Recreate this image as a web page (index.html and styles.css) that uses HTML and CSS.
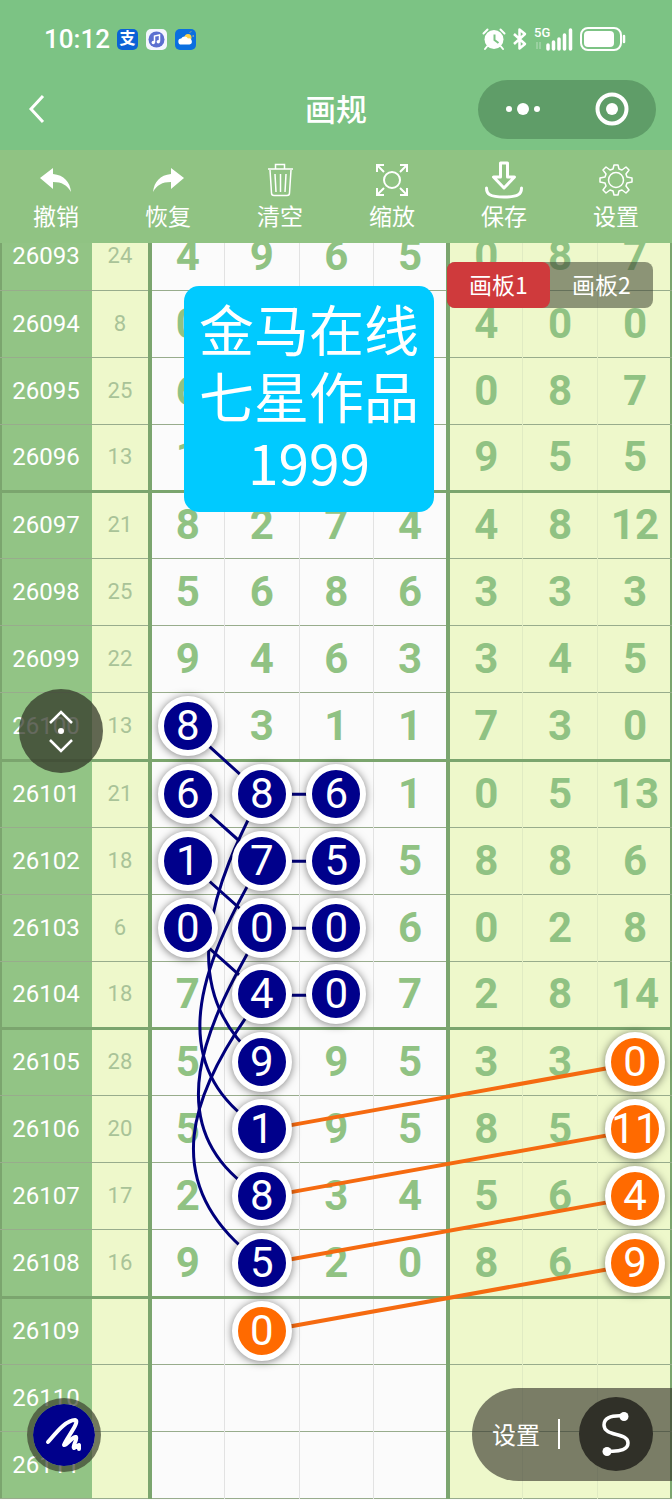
FILE: index.html
```html
<!DOCTYPE html>
<html lang="zh-CN">
<head>
    <meta charset="UTF-8">
    <meta name="viewport" content="width=device-width, initial-scale=1.0">
    <title>画规</title>
    <link rel="stylesheet" href="styles.css">
</head>
<body>
    <header class="header">
        <div class="status-bar">
            <span class="time">10:12</span>
            <span class="app-icon app-pay">支</span>
            <svg class="app-svg" viewBox="0 0 21 21">
                <rect width="21" height="21" rx="5" fill="#f4f6ff"/>
                <circle cx="10.500" cy="10.500" r="8" fill="#5b6fd0"/>
                <path d="M8.500 13.500V7l5-1v6.500" fill="none" stroke="#fff" stroke-width="1.500"/>
                <circle cx="7.300" cy="13.500" r="1.700" fill="#fff"/>
                <circle cx="12.300" cy="12.700" r="1.700" fill="#fff"/>
            </svg>
            <svg class="app-svg" viewBox="0 0 21 21">
                <rect width="21" height="21" rx="5" fill="#0a6fe0"/>
                <circle cx="13" cy="8.500" r="3.500" fill="#ffd34a"/>
                <path d="M15 3.500l1-1M17.500 7h1.500" stroke="#ffd34a"/>
                <path d="M6.500 15.500a3 3 0 0 1-.3-6A3.800 3.800 0 0 1 13 9.500a3 3 0 0 1 1.500 6z" fill="#fff"/>
            </svg>
            <div class="status-right">
                <svg width="24" height="24" viewBox="0 0 24 24">
                    <path d="M1.500 6.500l4-4M22.500 6.500l-4-4M5 19.500l-2 2.500M19 19.500l2 2.500" stroke="#fff" stroke-width="2" stroke-linecap="round"/>
                    <circle cx="12" cy="12.500" r="9.500" fill="#fff"/>
                    <path d="M12.500 7.500v5.500l4 3" fill="none" stroke="#7cc384" stroke-width="2"/>
                </svg>
                <svg width="16" height="24" viewBox="0 0 16 24">
                    <path d="M2 7l11 10-5.500 4.500v-19L13 7 2 17" fill="none" stroke="#fff" stroke-width="2.500" stroke-linejoin="round"/>
                </svg>
                <div class="signal">
                    <span class="net">5G</span>
                    <svg width="40" height="24" viewBox="0 0 40 24">
                        <path d="M3 15v7M6 15v7" stroke="#b9dfbd"/>
                        <path d="M14 18v4M19.500 15v7M25 12v10M30.500 8v14M36.500 3v19" stroke="#fff" stroke-width="3.500" stroke-linecap="round"/>
                    </svg>
                </div>
                <svg width="46" height="24" viewBox="0 0 46 24">
                    <rect x="1" y="1" width="40" height="22" rx="7" fill="none" stroke="#fff" stroke-width="2"/>
                    <rect x="4" y="4" width="30" height="16" rx="4" fill="#fff"/>
                    <path d="M44 9v6" stroke="#fff" stroke-width="2.500" stroke-linecap="round"/>
                </svg>
            </div>
        </div>
        <div class="nav-bar">
            <button class="back" aria-label="返回">
                <svg width="18" height="30" viewBox="0 0 18 30"><path d="M15 2L3 15l12 13" fill="none" stroke="#fff" stroke-width="3"/></svg>
            </button>
            <h1>画规</h1>
            <div class="capsule">
                <button aria-label="更多">
                    <svg width="38" height="14" viewBox="0 0 38 14" fill="#fff">
                        <circle cx="5" cy="7" r="3"/><circle cx="19" cy="7" r="6"/><circle cx="33" cy="7" r="3"/>
                    </svg>
                </button>
                <button aria-label="关闭">
                    <svg width="34" height="34" viewBox="0 0 34 34">
                        <circle cx="17" cy="17" r="14.500" fill="none" stroke="#fff" stroke-width="4"/><circle cx="17" cy="17" r="6" fill="#fff"/>
                    </svg>
                </button>
            </div>
        </div>
    </header>

    <nav class="toolbar">
        <button>
            <svg viewBox="0 0 40 40"><path d="M4 18L17 8v6c11 1 17 8 18 18-4-7-9-10-18-10v7z" fill="#fff"/></svg>
            撤销
        </button>
        <button>
            <svg viewBox="0 0 40 40"><path d="M36 18L23 8v6C12 15 6 22 5 32c4-7 9-10 18-10v7z" fill="#fff"/></svg>
            恢复
        </button>
        <button>
            <svg viewBox="0 0 40 40" fill="none" stroke="#fff" stroke-width="1.500">
                <path d="M8 9h25M15.500 9V4.500h9V9M10 10l1.500 23q0 2.500 2.500 2.500h13q2.500 0 2.500-2.500L31 10M15 14l1 18M20.500 14v18M26 14l-1 18"/>
            </svg>
            清空
        </button>
        <button>
            <svg viewBox="0 0 40 40" fill="none" stroke="#fff" stroke-width="2">
                <circle cx="20" cy="20" r="8"/>
                <path d="M5 12V5h7M28 5h7v7M35 28v7h-7M12 35H5v-7M5 5l7 7M35 5l-7 7M35 35l-7-7M5 35l7-7"/>
            </svg>
            缩放
        </button>
        <button>
            <svg viewBox="0 0 40 40" fill="none" stroke="#fff" stroke-width="3" stroke-linejoin="round" stroke-linecap="round">
                <path d="M16.500 3h7v14h7L20 28 9.500 17h7z"/>
                <path d="M2.500 28c0 6 3 9 17.500 9s17.500-3 17.500-9"/>
            </svg>
            保存
        </button>
        <button>
            <svg viewBox="0 0 40 40" fill="none" stroke="#fff" stroke-width="1.500" stroke-linejoin="round">
                <circle cx="20" cy="20" r="7.500"/>
                <path d="M17 9l1-4h4l1 4 3 1 4-3 3 3-3 4 1 3 5 1v4l-5 1-1 3 3 4-3 3-4-3-3 1-1 4h-4l-1-4-3-1-4 3-3-3 3-4-1-3-5-1v-4l5-1 1-3-3-4 3-3 4 3z"/>
            </svg>
            设置
        </button>
    </nav>

    <main class="chart">
        <table class="trend">
            <colgroup>
                <col class="col-issue"><col class="col-sum">
                <col><col><col><col><col><col><col>
            </colgroup>
            <tbody>
                <tr><th>26093</th><td>24</td><td>4</td><td>9</td><td>6</td><td>5</td><td>0</td><td>8</td><td>7</td></tr>
                <tr><th>26094</th><td>8</td><td>0</td><td></td><td></td><td></td><td>4</td><td>0</td><td>0</td></tr>
                <tr><th>26095</th><td>25</td><td>6</td><td></td><td></td><td></td><td>0</td><td>8</td><td>7</td></tr>
                <tr><th>26096</th><td>13</td><td>1</td><td></td><td></td><td></td><td>9</td><td>5</td><td>5</td></tr>
                <tr><th>26097</th><td>21</td><td>8</td><td>2</td><td>7</td><td>4</td><td>4</td><td>8</td><td>12</td></tr>
                <tr><th>26098</th><td>25</td><td>5</td><td>6</td><td>8</td><td>6</td><td>3</td><td>3</td><td>3</td></tr>
                <tr><th>26099</th><td>22</td><td>9</td><td>4</td><td>6</td><td>3</td><td>3</td><td>4</td><td>5</td></tr>
                <tr><th>26100</th><td>13</td><td><span class="ball">8</span></td><td>3</td><td>1</td><td>1</td><td>7</td><td>3</td><td>0</td></tr>
                <tr><th>26101</th><td>21</td><td><span class="ball">6</span></td><td><span class="ball">8</span></td><td><span class="ball">6</span></td><td>1</td><td>0</td><td>5</td><td>13</td></tr>
                <tr><th>26102</th><td>18</td><td><span class="ball">1</span></td><td><span class="ball">7</span></td><td><span class="ball">5</span></td><td>5</td><td>8</td><td>8</td><td>6</td></tr>
                <tr><th>26103</th><td>6</td><td><span class="ball">0</span></td><td><span class="ball">0</span></td><td><span class="ball">0</span></td><td>6</td><td>0</td><td>2</td><td>8</td></tr>
                <tr><th>26104</th><td>18</td><td>7</td><td><span class="ball">4</span></td><td><span class="ball">0</span></td><td>7</td><td>2</td><td>8</td><td>14</td></tr>
                <tr><th>26105</th><td>28</td><td>5</td><td><span class="ball">9</span></td><td>9</td><td>5</td><td>3</td><td>3</td><td><span class="ball orange">0</span></td></tr>
                <tr><th>26106</th><td>20</td><td>5</td><td><span class="ball">1</span></td><td>9</td><td>5</td><td>8</td><td>5</td><td><span class="ball orange">11</span></td></tr>
                <tr><th>26107</th><td>17</td><td>2</td><td><span class="ball">8</span></td><td>3</td><td>4</td><td>5</td><td>6</td><td><span class="ball orange">4</span></td></tr>
                <tr><th>26108</th><td>16</td><td>9</td><td><span class="ball">5</span></td><td>2</td><td>0</td><td>8</td><td>6</td><td><span class="ball orange">9</span></td></tr>
                <tr><th>26109</th><td></td><td></td><td><span class="ball orange">0</span></td><td></td><td></td><td></td><td></td><td></td></tr>
                <tr><th>26110</th><td></td><td></td><td></td><td></td><td></td><td></td><td></td><td></td></tr>
                <tr><th>26111</th><td></td><td></td><td></td><td></td><td></td><td></td><td></td><td></td></tr>
            </tbody>
        </table>

        <!-- 连线 -->
        <svg class="lines" viewBox="0 243 672 1255" preserveAspectRatio="none">
            <g class="line-blue">
                <path d="M187 726L262 794H336M187 794L262 861H336M187 861L262 928H336M187 928L262 995H336"/>
                <path d="M262 793C215 880 170 990 262 1062"/>
                <path d="M262 860C210 950 153 1062 262 1129"/>
                <path d="M262 928C208 1020 151 1130 262 1196"/>
                <path d="M262 995C190 1090 153 1185 262 1263"/>
            </g>
            <g class="line-orange">
                <path d="M262 1130L635 1063M262 1197L635 1130M262 1264L635 1197M262 1331L635 1264"/>
            </g>
        </svg>

        <div class="note">金马在线<br>七星作品<br>1999</div>

        <div class="boards">
            <button class="active">画板1</button>
            <button>画板2</button>
        </div>

        <button class="scroller" aria-label="上下滚动">
            <svg width="28" height="46" viewBox="0 0 28 46">
                <path d="M3 15L14 4l11 11M3 32l11 11 11-11" fill="none" stroke="#fff" stroke-width="2.500"/>
                <circle cx="14" cy="23" r="3" fill="#fff"/>
            </svg>
        </button>

        <button class="pen" aria-label="画笔">
            <svg width="38" height="38" viewBox="0 0 38 38">
                <path d="M3 26C11 17 21 4 30 4c6 1-10 20-11 25 3 1 8-9 12-8 2 2-4 9-2 11l5-3 0 4" fill="none" stroke="#fff" stroke-width="4" stroke-linecap="round" stroke-linejoin="round"/>
            </svg>
        </button>

        <div class="tool-panel">
            <button class="panel-set">设置</button>
            <button class="curve" aria-label="曲线">
                <svg width="32" height="46" viewBox="0 0 32 46">
                    <path d="M24 5C9 4 4 8 4 14c0 12 24 7 24 18 0 6-7 9-20 8" fill="none" stroke="#fff" stroke-width="3.500"/>
                    <circle cx="24" cy="5.500" r="4.500" fill="#fff"/><circle cx="7" cy="40.500" r="4.500" fill="#fff"/>
                </svg>
            </button>
        </div>
    </main>
</body>
</html>
```
FILE: styles.css
```css
* {
    box-sizing: border-box;
}
body {
    margin: 0;
    background-color: #fbfbfb;
    font-family: Roboto, "Noto Sans CJK SC", sans-serif;
    color: white;
}
button {
    padding: 0;
    border: none;
    background: none;
    color: white;
    font-family: "Noto Sans CJK SC", sans-serif;
    cursor: pointer;
}
svg {
    display: block;
}

/* 顶部 */
.header {
    background-color: #7cc384;
}
.status-bar {
    display: flex;
    align-items: center;
    height: 78px;
    padding: 0 46px 0 44px;
}
.time {
    margin-right: 7px;
    font-size: 26px;
    font-weight: 500;
}
.app-icon,
.app-svg {
    width: 21px;
    height: 21px;
    margin-right: 8px;
}
.app-pay {
    border-radius: 5px;
    background-color: #0b62d6;
    font-size: 16px;
    font-weight: bold;
    line-height: 20px;
    text-align: center;
}
.status-right {
    display: flex;
    gap: 6px;
    margin-left: auto;
}
.signal {
    position: relative;
}
.net {
    position: absolute;
    top: -2px;
    left: 0;
    font-size: 13px;
    font-weight: 500;
}
.nav-bar {
    display: grid;
    grid-template-columns: 1fr auto 1fr;
    align-items: center;
    height: 72px;
    padding: 0 16px 10px 28px;
}
.nav-bar h1 {
    margin: 0;
    padding: 3px 12px 0 0;
    font-size: 31px;
    font-weight: 500;
    line-height: 40px;
}
.back {
    justify-self: start;
}
.capsule {
    display: flex;
    justify-self: end;
    width: 178px;
    height: 59px;
    border-radius: 30px;
    background-color: #5f9d68;
}
.capsule button {
    flex: 1;
    display: flex;
    align-items: center;
    justify-content: center;
}

/* 工具栏 */
.toolbar {
    display: flex;
    height: 93px;
    padding-top: 10px;
    background-color: #90c383;
}
.toolbar button {
    flex: 1;
    display: flex;
    flex-direction: column;
    align-items: center;
    font-size: 23px;
    line-height: 30px;
}
.toolbar svg {
    width: 40px;
    height: 40px;
}

/* 走势表 */
.chart {
    position: relative;
    overflow: hidden;
}
.trend {
    width: 100%;
    margin-top: -20px;
    table-layout: fixed;
    border-collapse: collapse;
}
.col-issue {
    width: 13.7%;
}
.col-sum {
    width: 8.6%;
}
.trend tr {
    height: 67px;
    border-bottom: 1px solid #98ac8c;
}
.trend tr:nth-child(8n) {
    height: 68px;
}
.trend tr:nth-child(4n) {
    border-bottom: 3px solid #7ba56e;
}
.trend th,
.trend td {
    padding: 0;
    text-align: center;
    vertical-align: middle;
}
.trend th {
    background-color: #92c485;
    box-shadow: inset 2px 0 #7ba56e;
    font-size: 24px;
    font-weight: normal;
}
.trend td {
    border-left: 1px solid #e2e2e2;
    background-color: #fbfbfb;
    color: #90c283;
    font-size: 42px;
    font-weight: bold;
    line-height: 48px;
}
.trend td:nth-child(2) {
    border-left: none;
    background-color: #eef8cb;
    color: #a9c398;
    font-size: 22px;
    font-weight: normal;
}
.trend td:nth-child(3),
.trend td:nth-child(7) {
    border-left: 4px solid #7ba56e;
}
.trend td:nth-child(n+7) {
    background-color: #eef8cb;
}
.trend td:nth-child(n+8) {
    border-left-color: #e0ebc3;
}
.trend td:last-child {
    box-shadow: inset -2px 0 #7ba56e;
}
.ball {
    position: relative;
    z-index: 2;
    display: flex;
    align-items: center;
    justify-content: center;
    width: 60px;
    height: 60px;
    margin: 0 auto;
    border: 6px solid white;
    border-radius: 50%;
    background-color: #00008b;
    box-shadow: 0 1px 8px rgba(0, 0, 0, 0.5);
    color: white;
    font-weight: normal;
}
.orange {
    background-color: #ff6a00;
}

.lines {
    position: absolute;
    top: 0;
    left: 0;
    z-index: 1;
    width: 100%;
    height: 100%;
    fill: none;
}
.line-blue {
    stroke: #00007c;
    stroke-width: 3;
}
.line-orange {
    stroke: #f56a10;
    stroke-width: 4;
}

/* 悬浮内容 */
.note {
    position: absolute;
    top: 43px;
    left: 184px;
    z-index: 3;
    padding: 8px 15px 17px;
    border-radius: 15px;
    background-color: #00caff;
    font-family: "Noto Sans CJK SC", sans-serif;
    font-size: 55px;
    line-height: 67px;
    text-align: center;
}
.boards {
    position: absolute;
    top: 19px;
    right: 19px;
    z-index: 3;
    display: flex;
    border-radius: 8px;
    background-color: rgba(60, 65, 50, 0.55);
}
.boards button {
    width: 103px;
    height: 46px;
    padding-bottom: 3px;
    border-radius: 8px;
    font-size: 23px;
}
.boards .active {
    background-color: #cf3a3c;
}
.scroller {
    position: absolute;
    top: 446px;
    left: 19px;
    z-index: 3;
    display: flex;
    align-items: center;
    justify-content: center;
    width: 84px;
    height: 84px;
    border-radius: 50%;
    background-color: rgba(50, 55, 40, 0.75);
}
.pen {
    position: absolute;
    bottom: 27px;
    left: 27px;
    z-index: 3;
    display: flex;
    align-items: center;
    justify-content: center;
    width: 74px;
    height: 74px;
    border: 6px solid rgba(60, 65, 45, 0.7);
    border-radius: 50%;
    background-color: #00008b;
    background-clip: padding-box;
}
.tool-panel {
    position: absolute;
    right: 0;
    bottom: 18px;
    z-index: 3;
    display: flex;
    align-items: center;
    height: 93px;
    padding: 0 19px 0 20px;
    border-radius: 47px 0 0 47px;
    background-color: rgba(50, 50, 40, 0.62);
}
.panel-set {
    height: 30px;
    margin-right: 19px;
    padding-right: 18px;
    border-right: 2px solid white;
    font-size: 24px;
    line-height: 28px;
}
.curve {
    display: flex;
    align-items: center;
    justify-content: center;
    width: 74px;
    height: 74px;
    border-radius: 50%;
    background-color: #303028;
}
```
